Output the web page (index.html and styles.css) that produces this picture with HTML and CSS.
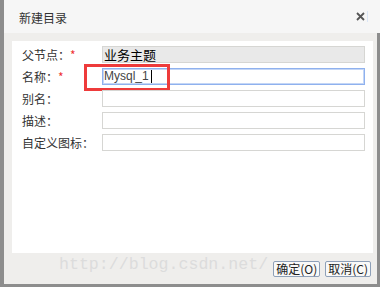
FILE: index.html
```html
<!DOCTYPE html>
<html lang="zh-CN">
<head>
    <meta charset="UTF-8">
    <title>新建目录</title>
    <link rel="stylesheet" href="styles.css">
</head>
<body>
    <div class="dialog">
        <div class="dialog-header">
            <span class="dialog-title">新建目录</span>
            <span class="close">
                <svg width="9" height="9" viewBox="0 0 9 9"><path d="M1 1 L8 8 M8 1 L1 8" stroke="#555" stroke-width="1.8" fill="none"/></svg>
            </span>
            <span class="close-edge"></span>
        </div>
        <div class="dialog-body">
            <div class="panel">
                <div class="row">
                    <label>父节点：<span class="req">*</span></label>
                    <div class="field readonly">业务主题</div>
                </div>
                <div class="row">
                    <label>名称：<span class="req">*</span></label>
                    <div class="field focus">Mysql_1<span class="caret"></span></div>
                    <span class="mark"></span>
                </div>
                <div class="row">
                    <label>别名：</label>
                    <div class="field"></div>
                </div>
                <div class="row">
                    <label>描述：</label>
                    <div class="field"></div>
                </div>
                <div class="row">
                    <label>自定义图标：</label>
                    <div class="field"></div>
                </div>
            </div>
            <div class="footer">
                <span class="watermark">http://blog.csdn.net/</span>
                <button>确定(O)</button>
                <button>取消(C)</button>
            </div>
        </div>
    </div>
</body>
</html>
```

FILE: styles.css
```css
body {
    margin: 0;
    font-family: "Noto Sans CJK SC", sans-serif;
    font-size: 12px;
    color: #333;
}
.dialog {
    width: 380px;
    height: 287px;
    box-sizing: border-box;
    border-left: 4px solid #8d8d8d;
    border-bottom: 3px solid #8d8d8d;
    display: flex;
    flex-direction: column;
    background: #efeeec;
}
.dialog-header {
    height: 33px;
    background: #f6f6f6;
    display: flex;
    align-items: center;
    padding-left: 15px;
    position: relative;
}
.dialog-title {
    font-size: 12px;
    color: #333;
    flex: 1;
    padding-top: 1px;
}
.close {
    width: 9px;
    height: 9px;
    margin-right: 15px;
    display: flex;
}
.close-edge {
    position: absolute;
    right: 12px;
    top: 11px;
    width: 1px;
    height: 11px;
    background: #dbe6f5;
}
.dialog-body {
    flex: 1;
    display: flex;
    flex-direction: column;
    border-right: 3px solid #8d8d8d;
    padding: 8px 0 0 8px;
}
.panel {
    background: #fff;
    height: 212px;
    margin-right: 4px;
    box-sizing: border-box;
    padding: 5px 8px 0 10px;
    display: flex;
    flex-direction: column;
    gap: 5px;
}
.row {
    display: flex;
    align-items: center;
    height: 17px;
    position: relative;
}
.row label {
    width: 80px;
    flex-shrink: 0;
    line-height: 17px;
}
.req {
    color: #e33;
    margin-left: 0;
}
.field {
    flex: 1;
    height: 17px;
    box-sizing: border-box;
    border: 1px solid #d6d6d3;
    background: #fff;
    line-height: 15px;
    padding-left: 1px;
}
.field.readonly {
    background: #e9e9e9;
    color: #000;
    font-size: 13px;
}
.field.focus {
    border-color: #8fb1ee;
    box-shadow: inset 0 0 0 1px #c4d6f6;
    font-family: "Liberation Sans", "Noto Sans CJK SC", sans-serif;
    font-size: 12px;
    color: #444;
    display: flex;
    align-items: center;
}
.caret {
    width: 1px;
    height: 13px;
    background: #000;
    margin-left: 2px;
}
.mark {
    position: absolute;
    left: 62px;
    top: -4px;
    width: 86px;
    height: 27px;
    box-sizing: border-box;
    border: 3px solid #ee3b3b;
}
.footer {
    flex: 1;
    display: flex;
    justify-content: flex-end;
    align-items: center;
    gap: 5px;
    padding-right: 6px;
    position: relative;
}
.watermark {
    position: absolute;
    left: 47px;
    top: 2px;
    font-family: "Liberation Mono", monospace;
    font-size: 16.6px;
    color: #dcdcdc;
}
button {
    position: relative;
    height: 16px;
    padding: 0 2px;
    font-family: "Noto Sans CJK SC", sans-serif;
    font-size: 12px;
    line-height: 14px;
    color: #222;
    border: 1px solid #8ea0b8;
    border-radius: 2px;
    background: rgba(250, 250, 250, 0.85);
    cursor: pointer;
}
```
